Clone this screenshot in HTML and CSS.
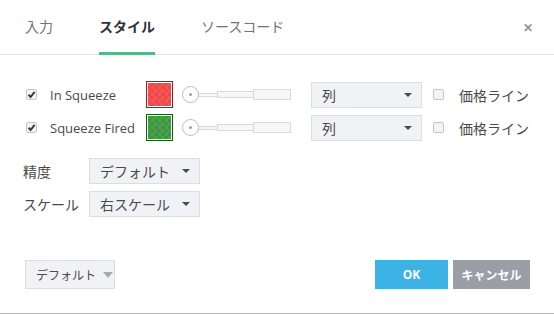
FILE: index.html
```html
<!DOCTYPE html>
<html lang="ja">
<head>
    <meta charset="UTF-8">
    <title>スタイル</title>
    <link rel="stylesheet" href="styles.css">
</head>
<body>
    <div class="dialog">
        <header class="tabs">
            <span class="tab">入力</span>
            <span class="tab active">スタイル</span>
            <span class="tab">ソースコード</span>
            <span class="close">&#x2715;</span>
        </header>

        <div class="content">
            <div class="plot-row">
                <span class="check on"><svg viewBox="0 0 11 11"><path d="M2.5 5.8 L4.6 8 L8.6 2.8" /></svg></span>
                <span class="plot-name">In Squeeze</span>
                <span class="swatch red"></span>
                <span class="slider"><span class="knob"></span><span class="seg s1"></span><span class="seg s2"></span><span class="seg s3"></span></span>
                <span class="select wide">列<i class="caret"></i></span>
                <span class="check"></span>
                <span class="opt-label">価格ライン</span>
            </div>
            <div class="plot-row">
                <span class="check on"><svg viewBox="0 0 11 11"><path d="M2.5 5.8 L4.6 8 L8.6 2.8" /></svg></span>
                <span class="plot-name">Squeeze Fired</span>
                <span class="swatch green"></span>
                <span class="slider"><span class="knob"></span><span class="seg s1"></span><span class="seg s2"></span><span class="seg s3"></span></span>
                <span class="select wide">列<i class="caret"></i></span>
                <span class="check"></span>
                <span class="opt-label">価格ライン</span>
            </div>

            <div class="prop-row first">
                <span class="prop-label">精度</span>
                <span class="select">デフォルト<i class="caret"></i></span>
            </div>
            <div class="prop-row">
                <span class="prop-label">スケール</span>
                <span class="select">右スケール<i class="caret"></i></span>
            </div>
        </div>

        <footer class="footer">
            <span class="btn-default">デフォルト<i class="caret light"></i></span>
            <span class="spacer"></span>
            <button class="btn ok">OK</button>
            <button class="btn cancel">キャンセル</button>
        </footer>
    </div>
</body>
</html>
```

FILE: styles.css
```css
body {
    margin: 0;
    background: #fff;
    font-family: "Open Sans", "Noto Sans CJK JP", sans-serif;
    font-size: 13px;
    color: #4a4a4a;
}
.dialog {
    width: 554px;
    height: 313px;
    border-bottom: 1px solid #b5b5b5;
    position: relative;
}
.tabs {
    display: flex;
    align-items: center;
    gap: 46px;
    height: 55px;
    padding-left: 25px;
    border-bottom: 1px solid #e0e3eb;
    box-sizing: border-box;
}
.tab {
    font-size: 14px;
    color: #70737c;
    height: 55px;
    line-height: 54px;
    box-sizing: border-box;
}
.tab.active {
    color: #2f323b;
    font-weight: bold;
    border-bottom: 3px solid #53b987;
    margin-bottom: -1px;
}
.close {
    margin-left: auto;
    margin-right: 21px;
    color: #8f939c;
    font-size: 12px;
    font-weight: bold;
}
.content {
    padding: 26px 0 0 25px;
}
.plot-row {
    display: flex;
    align-items: center;
    height: 27px;
    margin-bottom: 6px;
}
.check {
    width: 11px;
    height: 11px;
    border: 1px solid #c4c6cb;
    border-radius: 2px;
    background: #f3f4f6;
    box-sizing: border-box;
    display: inline-block;
    flex: none;
}
.check svg {
    width: 11px;
    height: 11px;
    margin: -1px;
    display: block;
}
.check svg path {
    fill: none;
    stroke: #3a3a3a;
    stroke-width: 2;
}
.plot-row .check.on {
    margin-left: 1px;
}
.plot-name {
    width: 96px;
    margin-left: 13px;
    font-size: 13px;
}
.swatch {
    width: 27px;
    height: 27px;
    box-sizing: border-box;
    padding: 1px;
    background-clip: content-box;
    flex: none;
}
.swatch.red {
    border: 1px solid #b51212;
    background-image: repeating-conic-gradient(#ef4848 0 25%, #f65555 0 50%);
    background-size: 7px 7px;
    background-color: #f24d4d;
}
.swatch.green {
    border: 1px solid #0f5c12;
    background-image: repeating-conic-gradient(#3d953f 0 25%, #47a249 0 50%);
    background-size: 7px 7px;
    background-color: #43a045;
}
.slider {
    display: flex;
    align-items: center;
    margin-left: 9px;
    width: 109px;
}
.knob {
    width: 17px;
    height: 17px;
    border: 1px solid #b9bdc6;
    border-radius: 50%;
    box-sizing: border-box;
    position: relative;
    background: #fff;
    flex: none;
}
.knob::after {
    content: "";
    position: absolute;
    left: 6px;
    top: 6px;
    width: 3px;
    height: 3px;
    border-radius: 50%;
    background: #9a9ea6;
}
.seg {
    border: 1px solid #d8dadf;
    background: #f7f7f8;
    box-sizing: border-box;
    margin-left: -1px;
}
.s1 { width: 20px; height: 4px; }
.s2 { width: 37px; height: 7px; }
.s3 { width: 38px; height: 11px; }
.select {
    display: flex;
    align-items: center;
    width: 111px;
    height: 26px;
    padding: 0 9px 0 10px;
    box-sizing: border-box;
    background: #f1f2f6;
    border: 1px solid #dcdee3;
    color: #4a4a4a;
    font-size: 14px;
    flex: none;
}
.select.wide {
    margin-left: 20px;
}
.caret {
    margin-left: auto;
    width: 0;
    height: 0;
    border-left: 4px solid transparent;
    border-right: 4px solid transparent;
    border-top: 4px solid #4a4a4a;
}
.caret.light {
    margin-left: 7px;
    border-left-width: 5px;
    border-right-width: 5px;
    border-top: 6px solid #a9abb1;
}
.plot-row .check:not(.on) {
    margin-left: 11px;
}
.opt-label {
    margin-left: 15px;
    font-size: 14px;
}
.prop-row {
    display: flex;
    align-items: center;
    margin-top: 7px;
}
.prop-row.first {
    margin-top: 17px;
}
.prop-label {
    width: 66px;
    margin-left: -2px;
    font-size: 14px;
}
.footer {
    display: flex;
    align-items: center;
    gap: 5px;
    padding: 43px 24px 0 25px;
}
.spacer {
    flex: 1;
}
.btn-default {
    display: flex;
    align-items: center;
    width: 90px;
    height: 29px;
    box-sizing: border-box;
    padding-left: 10px;
    background: #f1f2f6;
    border: 1px solid #dcdee3;
    font-size: 12px;
    color: #4a4a4a;
}
.btn {
    height: 29px;
    border: none;
    color: #fff;
    font-family: "Open Sans", "Noto Sans CJK JP", sans-serif;
    font-size: 12px;
    font-weight: bold;
    padding: 0;
}
.ok {
    width: 73px;
    background: #3cb3e4;
}
.cancel {
    width: 77px;
    background: #9b9ea5;
}
```
